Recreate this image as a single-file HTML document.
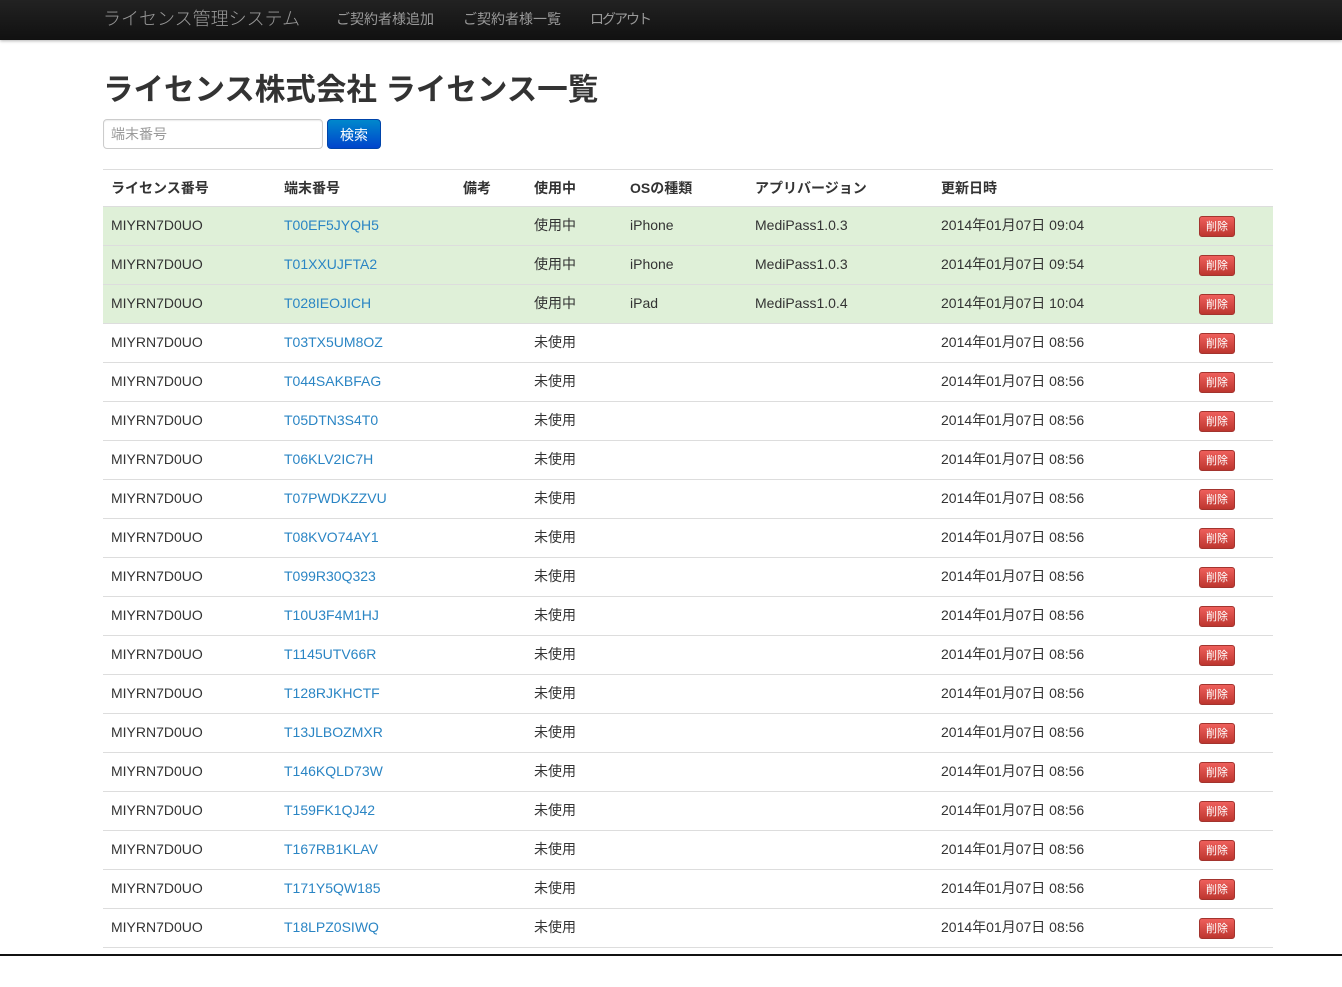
<!DOCTYPE html>
<html><head><meta charset="utf-8"><style>
body{margin:0;width:1342px;height:956px;overflow:hidden;background:#fff;font-family:"Liberation Sans","Noto Sans CJK JP",sans-serif;color:#333;position:relative}
.nav{height:40px;background:linear-gradient(#222,#111);box-shadow:0 1px 3px rgba(0,0,0,.3);position:relative}
.nav span{position:absolute;top:0;line-height:38px;color:#999;font-size:14px}
.nav .brand{left:103px;font-size:18px;color:#999;font-weight:300}
h1{position:absolute;left:103px;top:70px;margin:0;font-size:30.5px;font-weight:bold;color:#333;line-height:40px}
.inp{position:absolute;left:103px;top:119px;width:211px;height:28px;border:1px solid #ccc;border-radius:4px;box-shadow:inset 0 1px 1px rgba(0,0,0,.075);font-size:14px;color:#999;line-height:28px;padding-left:7px}
.btn{position:absolute;left:327px;top:119px;width:54px;height:30px;border-radius:4px;background:linear-gradient(#0088cc,#0044cc);color:#fff;font-size:14px;line-height:30px;text-align:center;border:1px solid #0044aa;box-sizing:border-box}
table{position:absolute;left:103px;top:169px;width:1170px;border-collapse:collapse;table-layout:fixed;font-size:14px}
td,th{height:38px;padding:0 0 0 8px;border-top:1px solid #ddd;text-align:left;vertical-align:middle;white-space:nowrap}
td{padding-bottom:3px;box-sizing:border-box;height:39px}
th{font-weight:bold;color:#333;height:36px}
tr.g td{background:#dff0d8}
a{color:#2a85c4;text-decoration:none}
.d{display:inline-block;width:36px;height:21px;border-radius:3px;background:linear-gradient(#ee5f5b,#bd362f);color:#fff;font-size:11px;line-height:21px;text-align:center;border:1px solid #a3342e;box-sizing:border-box;vertical-align:middle;position:relative;top:2px}
.bot{position:absolute;left:0;top:954px;width:1342px;height:2px;background:#111}
</style></head><body>
<div class="nav"><span class="brand">ライセンス管理システム</span><span style="left:336px">ご契約者様追加</span><span style="left:463px">ご契約者様一覧</span><span style="left:590px;letter-spacing:-2px">ログアウト</span></div>
<h1>ライセンス株式会社 ライセンス一覧</h1>
<div class="inp">端末番号</div><div class="btn">検索</div>
<table>
<colgroup><col style="width:173px"><col style="width:179px"><col style="width:71px"><col style="width:96px"><col style="width:125px"><col style="width:186px"><col style="width:258px"><col style="width:82px"></colgroup>
<tr><th>ライセンス番号</th><th>端末番号</th><th>備考</th><th>使用中</th><th>OSの種類</th><th>アプリバージョン</th><th>更新日時</th><th></th></tr>
<tr class="g"><td>MIYRN7D0UO</td><td><a>T00EF5JYQH5</a></td><td></td><td>使用中</td><td>iPhone</td><td>MediPass1.0.3</td><td>2014年01月07日 09:04</td><td><span class="d">削除</span></td></tr>
<tr class="g"><td>MIYRN7D0UO</td><td><a>T01XXUJFTA2</a></td><td></td><td>使用中</td><td>iPhone</td><td>MediPass1.0.3</td><td>2014年01月07日 09:54</td><td><span class="d">削除</span></td></tr>
<tr class="g"><td>MIYRN7D0UO</td><td><a>T028IEOJICH</a></td><td></td><td>使用中</td><td>iPad</td><td>MediPass1.0.4</td><td>2014年01月07日 10:04</td><td><span class="d">削除</span></td></tr>
<tr><td>MIYRN7D0UO</td><td><a>T03TX5UM8OZ</a></td><td></td><td>未使用</td><td></td><td></td><td>2014年01月07日 08:56</td><td><span class="d">削除</span></td></tr>
<tr><td>MIYRN7D0UO</td><td><a>T044SAKBFAG</a></td><td></td><td>未使用</td><td></td><td></td><td>2014年01月07日 08:56</td><td><span class="d">削除</span></td></tr>
<tr><td>MIYRN7D0UO</td><td><a>T05DTN3S4T0</a></td><td></td><td>未使用</td><td></td><td></td><td>2014年01月07日 08:56</td><td><span class="d">削除</span></td></tr>
<tr><td>MIYRN7D0UO</td><td><a>T06KLV2IC7H</a></td><td></td><td>未使用</td><td></td><td></td><td>2014年01月07日 08:56</td><td><span class="d">削除</span></td></tr>
<tr><td>MIYRN7D0UO</td><td><a>T07PWDKZZVU</a></td><td></td><td>未使用</td><td></td><td></td><td>2014年01月07日 08:56</td><td><span class="d">削除</span></td></tr>
<tr><td>MIYRN7D0UO</td><td><a>T08KVO74AY1</a></td><td></td><td>未使用</td><td></td><td></td><td>2014年01月07日 08:56</td><td><span class="d">削除</span></td></tr>
<tr><td>MIYRN7D0UO</td><td><a>T099R30Q323</a></td><td></td><td>未使用</td><td></td><td></td><td>2014年01月07日 08:56</td><td><span class="d">削除</span></td></tr>
<tr><td>MIYRN7D0UO</td><td><a>T10U3F4M1HJ</a></td><td></td><td>未使用</td><td></td><td></td><td>2014年01月07日 08:56</td><td><span class="d">削除</span></td></tr>
<tr><td>MIYRN7D0UO</td><td><a>T1145UTV66R</a></td><td></td><td>未使用</td><td></td><td></td><td>2014年01月07日 08:56</td><td><span class="d">削除</span></td></tr>
<tr><td>MIYRN7D0UO</td><td><a>T128RJKHCTF</a></td><td></td><td>未使用</td><td></td><td></td><td>2014年01月07日 08:56</td><td><span class="d">削除</span></td></tr>
<tr><td>MIYRN7D0UO</td><td><a>T13JLBOZMXR</a></td><td></td><td>未使用</td><td></td><td></td><td>2014年01月07日 08:56</td><td><span class="d">削除</span></td></tr>
<tr><td>MIYRN7D0UO</td><td><a>T146KQLD73W</a></td><td></td><td>未使用</td><td></td><td></td><td>2014年01月07日 08:56</td><td><span class="d">削除</span></td></tr>
<tr><td>MIYRN7D0UO</td><td><a>T159FK1QJ42</a></td><td></td><td>未使用</td><td></td><td></td><td>2014年01月07日 08:56</td><td><span class="d">削除</span></td></tr>
<tr><td>MIYRN7D0UO</td><td><a>T167RB1KLAV</a></td><td></td><td>未使用</td><td></td><td></td><td>2014年01月07日 08:56</td><td><span class="d">削除</span></td></tr>
<tr><td>MIYRN7D0UO</td><td><a>T171Y5QW185</a></td><td></td><td>未使用</td><td></td><td></td><td>2014年01月07日 08:56</td><td><span class="d">削除</span></td></tr>
<tr><td>MIYRN7D0UO</td><td><a>T18LPZ0SIWQ</a></td><td></td><td>未使用</td><td></td><td></td><td>2014年01月07日 08:56</td><td><span class="d">削除</span></td></tr>
<tr><td style="height:20px"></td><td></td><td></td><td></td><td></td><td></td><td></td><td></td></tr>
</table>
<div class="bot"></div>
</body></html>
